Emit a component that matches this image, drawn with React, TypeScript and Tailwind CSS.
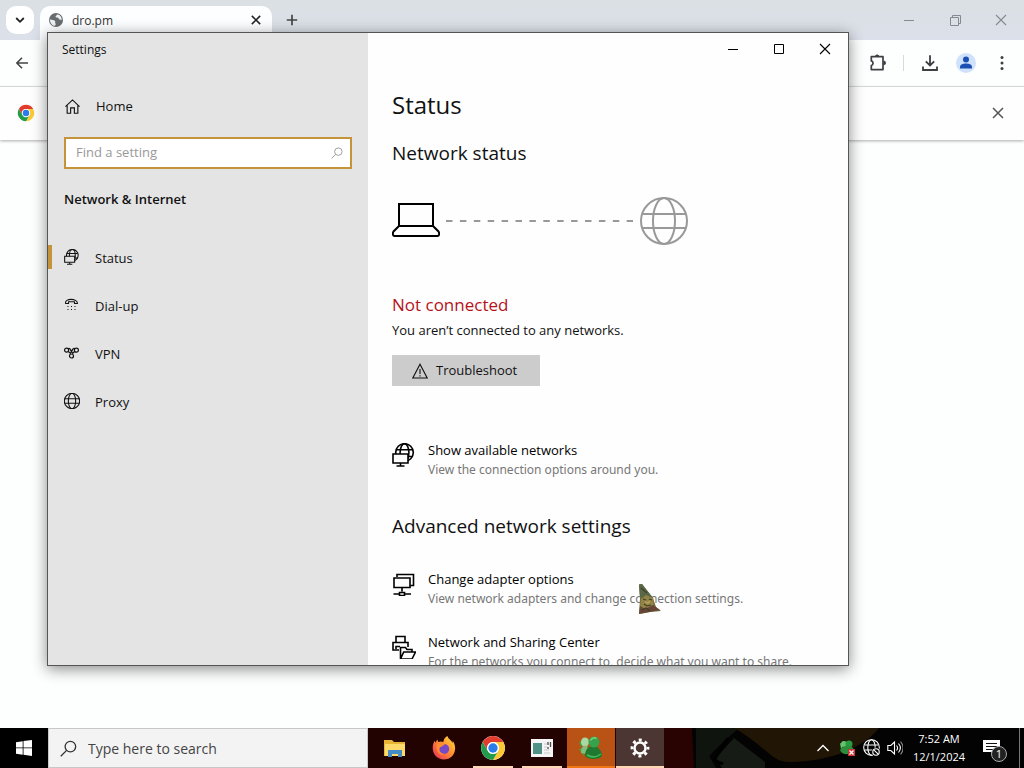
import type { ReactNode } from "react";

function ChromeLogo({ className }: { className?: string }) {
  return (
    <svg viewBox="0 0 48 48" className={className} aria-hidden="true">
      <circle cx="24" cy="24" r="22" fill="#fff" />
      <path d="M24 13H43.05A22 22 0 0 0 4.95 13L14.47 29.5A11 11 0 0 1 24 13Z" fill="#e33b2e" />
      <path d="M33.53 29.5 24 46A22 22 0 0 0 43.05 13H24A11 11 0 0 1 33.53 29.5Z" fill="#fcc934" />
      <path d="M14.47 29.5 4.95 13A22 22 0 0 0 24 46L33.53 29.5A11 11 0 0 1 14.47 29.5Z" fill="#229b4b" />
      <circle cx="24" cy="24" r="11" fill="#fff" />
      <circle cx="24" cy="24" r="8.6" fill="#2a7de9" />
    </svg>
  );
}

function GlobeIcon({ className, thin = 1.4 }: { className?: string; thin?: number }) {
  return (
    <svg viewBox="0 0 48 48" className={className} fill="none" stroke="currentColor" strokeWidth={thin} aria-hidden="true">
      <circle cx="24" cy="24" r="23" />
      <ellipse cx="24" cy="24" rx="11" ry="23" />
      <path d="M2.5 17h43M2.5 31h43" />
    </svg>
  );
}

function GlobeMonitorIcon({ className, fill }: { className?: string; fill: string }) {
  return (
    <svg viewBox="0 0 24 24" className={className} fill="none" stroke="currentColor" strokeWidth="1.6" aria-hidden="true">
      <circle cx="12.5" cy="9.5" r="8.8" />
      <ellipse cx="12.5" cy="9.5" rx="4.4" ry="8.8" />
      <path d="M4.5 6.800h16M16 13.500h5" />
      <path d="M1 11h15v9H1z" fill={fill} />
      <path d="M8.500 20v3M4.500 23h8" />
    </svg>
  );
}

function CloseIcon({ className, width = 1.6 }: { className?: string; width?: number }) {
  return (
    <svg viewBox="0 0 12 12" className={className} fill="none" stroke="currentColor" strokeWidth={width} aria-hidden="true">
      <path d="m1 1 10 10M11 1 1 11" />
    </svg>
  );
}

function SearchGlyph({ className }: { className?: string }) {
  return (
    <svg viewBox="0 0 18 18" className={className} fill="none" stroke="currentColor" strokeWidth="1.4" aria-hidden="true">
      <circle cx="11" cy="7" r="5.6" />
      <path d="m7 11-6.2 6.2" />
    </svg>
  );
}

function BrowserWindow() {
  return (
    <section aria-label="Browser" className="flex min-h-0 flex-1 flex-col bg-[#fdfefe]">
      <header className="flex h-10 items-center bg-linear-to-b from-[#dae0e3] to-[#dce0ea] pl-1.5">
        <button aria-label="Search tabs" className="flex size-7 items-center justify-center rounded-[10px] bg-white">
          <svg viewBox="0 0 10 10" className="size-2.5" fill="none" stroke="#222" strokeWidth="1.8"><path d="m1.2 3 3.8 3.8L8.8 3" /></svg>
        </button>
        <div className="ml-1.5 flex h-[34px] w-58 items-center self-end rounded-t-[10px] bg-[#fcfeff] pr-[11px] pb-1.5 pl-2">
          <svg viewBox="0 0 16 16" className="size-4" aria-hidden="true">
            <circle cx="8" cy="8" r="7" fill="#6a6d70" />
            <path d="M2 7.200c1.500 1 4 .4 5 1.800.7 1-.3 1.700.5 2.600.5.600 0 1.500-.5 2.200C4 13.500 1.800 11 2 7.200ZM9.500 2.200c-.2 1.300-1.600 1-1.900 2-.2 1 .6 1.400 1.700 1.400 1.300 0 1.200 1.600 2.300 2 .9.300 1.500-.2 2.200.3C13.900 5 12 2.800 9.500 2.200Z" fill="#eef0f1" />
          </svg>
          <span className="ml-2 flex-1 pt-0.5 text-xs text-[#333]">dro.pm</span>
          <button aria-label="Close tab" className="text-[#222]"><CloseIcon className="size-2.5" width={1.9} /></button>
        </div>
        <button aria-label="New tab" className="ml-3.5 text-[#444]">
          <svg viewBox="0 0 12 12" className="size-3" fill="none" stroke="currentColor" strokeWidth="1.7"><path d="M6 .8v10.400M.8 6h10.400" /></svg>
        </button>
        <div className="ml-auto flex text-[#858a90]">
          <button aria-label="Minimize browser" className="flex h-10 w-[46px] items-center justify-center">
            <svg viewBox="0 0 10 10" className="size-2.5" stroke="currentColor"><path d="M0 5.500h10" /></svg>
          </button>
          <button aria-label="Restore browser" className="flex h-10 w-[46px] items-center justify-center">
            <svg viewBox="0 0 11 11" className="size-[11px]" fill="none" stroke="currentColor"><path d="M.5 2.500h8v8h-8zM2.500 2.500v-2h8v8h-2" /></svg>
          </button>
          <button aria-label="Close browser" className="flex h-10 w-[46px] items-center justify-center"><CloseIcon className="size-3" width={1.1} /></button>
        </div>
      </header>
      <div className="flex h-[47px] items-center justify-between border-b border-[#dcdfe0] bg-[#fcfffe] pr-3 pl-4">
        <button aria-label="Back" className="text-[#444]">
          <svg viewBox="0 0 12 12" className="size-3" fill="none" stroke="currentColor" strokeWidth="1.5"><path d="M12 6H1M6 .8.900 6 6 11.200" /></svg>
        </button>
        <div className="flex items-center text-[#3c4043]">
          <button aria-label="Extensions">
            <svg viewBox="0 0 18 18" className="size-[18px]" fill="none" stroke="currentColor" strokeWidth="1.700" strokeLinejoin="round">
              <path d="M2.300 2.700h11.700v12.900H2.300v-4c2.300-.5 2.300-4.200 0-4.700z" />
              <path d="M6.300 2.300A1.900 1.900 0 0 1 10 2.300zM14.800 7a1.900 1.900 0 0 1 0 3.800z" fill="currentColor" strokeWidth=".6" />
            </svg>
          </button>
          <span className="ml-4 h-4 w-px bg-[#d6dadd]" />
          <button aria-label="Downloads" className="ml-[18px]">
            <svg viewBox="0 0 16 16" className="size-4" fill="none" stroke="currentColor" strokeWidth="1.800"><path d="M8 .3v10M3.800 6.300 8 10.500l4.200-4.200M1 11.500V15h14v-3.500" /></svg>
          </button>
          <button aria-label="Profile" className="ml-[18px] flex size-5 items-center justify-center rounded-full bg-[#d0e2fb]">
            <svg viewBox="0 0 14 14" className="size-3.5" fill="#1a4fb4"><circle cx="7" cy="3.500" r="3" /><path d="M1 12.500v-2C1.500 8.300 4.500 7.500 7 7.500s5.500.8 6 3v2z" /></svg>
          </button>
          <button aria-label="Menu" className="ml-4 flex w-5 justify-center">
            <svg viewBox="0 0 4 16" className="h-4 w-1" fill="currentColor"><circle cx="2" cy="2.500" r="1.500" /><circle cx="2" cy="8" r="1.500" /><circle cx="2" cy="13.500" r="1.500" /></svg>
          </button>
        </div>
      </div>
      <div className="flex h-[53px] items-center justify-between bg-[#fefefe] pr-5 pb-px pl-[17px] shadow-[0_1px_3px_#aaaaaa]">
        <ChromeLogo className="size-[18px]" />
        <button aria-label="Dismiss" className="text-[#555]"><CloseIcon className="size-3" width={1.5} /></button>
      </div>
    </section>
  );
}

const navItems = [
  { label: "Status", icon: <GlobeMonitorIcon className="size-4" fill="#e4e4e4" /> },
  {
    label: "Dial-up",
    icon: (
      <svg viewBox="0 0 16 16" className="size-4" fill="none" stroke="currentColor" strokeWidth="1.100" aria-hidden="true">
        <path d="M1.500 6.500C.5 1 13.500 1 13.500 6.500h-3V4.800h-6v1.700z" strokeLinejoin="round" />
        <path d="M3.500 9.500h1M7 9.500h1M10.500 9.500h1M3.500 12.500h1M7 12.500h1M10.500 12.500h1" />
      </svg>
    ),
  },
  {
    label: "VPN",
    icon: (
      <svg viewBox="0 0 16 16" className="size-4" fill="none" stroke="currentColor" strokeWidth="1.200" aria-hidden="true">
        <circle cx="2.600" cy="5.200" r="2" /><circle cx="12.400" cy="5.200" r="2" /><circle cx="7.500" cy="11" r="2" />
        <path d="M4 3.700C6 2.500 6.500 5 7.500 6.500S9 9 9 9M11 3.700C9 2.500 8.500 5 7.500 6.500S6 9 6 9M4.200 6.500 6 7.800M10.800 6.500 9 7.800" />
      </svg>
    ),
  },
  { label: "Proxy", icon: <GlobeIcon className="size-4" thin={3.2} /> },
];

function SettingLink({ icon, title, children }: { icon: ReactNode; title: string; children: ReactNode }) {
  return (
    <a href="#" className="flex gap-3 text-black">
      <span className="flex size-6 shrink-0 translate-y-0.5 items-center justify-center">{icon}</span>
      <span className="whitespace-nowrap">
        <span className="block leading-[19px]">{title}</span>
        <span className="block font-['Noto_Sans',sans-serif] text-xs leading-[19px] text-[#777]">{children}</span>
      </span>
    </a>
  );
}

function SettingsWindow() {
  return (
    <section aria-label="Settings" className="absolute top-8 left-[47px] flex h-[634px] w-[802px] overflow-hidden border border-[#555] bg-[#fefefe] text-[13px] text-[#111] shadow-[0_3px_14px_#0007]">
      <aside className="w-80 shrink-0 bg-[#e4e4e4]">
        <div className="flex h-8 items-center pt-0.5 pl-3.5 text-xs">Settings</div>
        <a href="#" className="mt-[17px] flex h-12 items-center gap-4 pl-[17px]">
          <svg viewBox="0 0 16 16" className="size-[15px]" fill="none" stroke="currentColor" strokeWidth="1.200" aria-hidden="true"><path d="M.5 8.200 8 1l7.500 7.200M2.300 7v8.200H6V9.500h4v5.700h3.700V7" /></svg>
          <span className="pt-0.5">Home</span>
        </a>
        <label className="mx-4 mt-[7px] flex h-8 items-center border-2 border-[#c4933a] bg-white pr-[7px] pl-2.5">
          <input type="search" aria-label="Find a setting" placeholder="Find a setting" className="min-w-0 flex-1 outline-none placeholder:text-[#999]" />
          <SearchGlyph className="size-3 text-[#999]" />
        </label>
        <h2 className="mt-[18px] h-6 pl-4 leading-6 font-semibold">Network &amp; Internet</h2>
        <nav className="mt-[22px]">
          {navItems.map((item, index) => (
            <a key={item.label} href="#" aria-current={index === 0 ? "page" : undefined} className="flex h-12 items-center">
              <span className={index === 0 ? "h-6 w-1 bg-[#c4933a]" : "h-6 w-1"} />
              <span className="ml-3 w-[31px]">{item.icon}</span>
              <span className="pt-[3px]">{item.label}</span>
            </a>
          ))}
        </nav>
      </aside>

      <main className="min-w-0 flex-1">
        <div className="flex h-8 justify-end text-black">
          <button aria-label="Minimize" className="flex w-[46px] items-center justify-center"><svg viewBox="0 0 10 10" className="size-2.5" stroke="currentColor"><path d="M0 5.500h10" /></svg></button>
          <button aria-label="Maximize" className="flex w-[46px] items-center justify-center"><svg viewBox="0 0 10 10" className="size-2.5" fill="none" stroke="currentColor"><path d="M.5.500h9v9h-9z" /></svg></button>
          <button aria-label="Close" className="flex w-[46px] items-center justify-center"><CloseIcon className="size-3" width={1.1} /></button>
        </div>
        <div className="pl-6">
          <h1 className="mt-6 h-8 text-2xl leading-8">Status</h1>
          <h2 className="mt-5 h-6 text-[19px] leading-6">Network status</h2>
          <div className="mt-8 flex h-12 items-center">
            <svg viewBox="0 0 48 36" className="h-9 w-12" fill="none" stroke="#000" strokeWidth="2" aria-hidden="true">
              <path d="M7 1h34v22H7zM7 23l-5.500 5.500C.5 30 .5 33 2.500 33h43c2 0 2-3 1-4.500L41 23" />
            </svg>
            <svg viewBox="0 0 188 2" className="mx-1.5 h-0.5 w-[188px]" aria-hidden="true"><path d="M0 1h187" stroke="#999" strokeWidth="2" strokeDasharray="6.500 7.400" /></svg>
            <GlobeIcon className="size-12 text-[#999]" thin={2} />
          </div>
          <h3 className="mt-12 h-6 text-[17px] leading-6 text-[#b5121b]">Not connected</h3>
          <p className="mt-px h-6 leading-6">You aren’t connected to any networks.</p>
          <button className="mt-[13px] flex h-[31px] w-37 items-center gap-2 bg-[#ccc] pl-5">
            <svg viewBox="0 0 16 16" className="size-4" fill="none" stroke="currentColor" strokeWidth="1.100" aria-hidden="true"><path d="M8 1.200 15.200 15H.8zM8 6v5M8 12.200v1.200" /></svg>
            Troubleshoot
          </button>
          <div className="mt-[55px]">
            <SettingLink icon={<GlobeMonitorIcon className="size-6" fill="#fefefe" />} title="Show available networks">View the connection options around you.</SettingLink>
          </div>
          <h2 className="mt-[35px] h-6 text-[19px] leading-6">Advanced network settings</h2>
          <div className="mt-8 flex flex-col gap-[25px]">
            <SettingLink
              title="Change adapter options"
              icon={
                <svg viewBox="0 0 24 24" className="size-6" fill="none" stroke="currentColor" strokeWidth="1.600" aria-hidden="true">
                  <path d="M5 5V2.500h16.500v11h-3M2 6h16v9.500H2zM10 15.500v4M1.500 22H7M13 22h6M7.500 20.500h5v3h-5z" />
                </svg>
              }
            >
              View network adapters and change connection settings.
            </SettingLink>
            <SettingLink
              title="Network and Sharing Center"
              icon={
                <svg viewBox="0 0 24 24" className="size-6" fill="none" stroke="currentColor" strokeWidth="1.600" aria-hidden="true">
                  <path d="M4 7.500V1.500h9v6M7 15H1V7.500h15V12M4 14v-2.500h4" />
                  <path d="M8.500 24V12.500h5l1.500 2h5v2.500M8.500 24l3.200-7H23.500L20 24z" />
                </svg>
              }
            >
              For the networks you connect to, decide what you want to share.
            </SettingLink>
          </div>
        </div>
      </main>
    </section>
  );
}

function GnomePointer() {
  return (
    <svg viewBox="0 0 24 32" className="pointer-events-none absolute top-[583px] left-[638px] h-8 w-6" aria-hidden="true">
      <path d="M1 1.500 4 1l11 14 3 9 5 4-11 1-11 2 1-15z" fill="#6c6b3c" />
      <path d="m1 1.500 3-.5 11 14-4 1-9-2z" fill="#596747" />
      <path d="m3 16 5-4 7 3 1 9-8 4-6-4z" fill="#918247" />
      <path d="m2 23 5 3 8-4 7 5-21 4z" fill="#684536" />
      <path d="m5 16 3 1m3-1 3 1M6 21l3 2 4-1M3 5l6 5M4 27l4-2 4 3" stroke="#403d27" strokeWidth="1.100" fill="none" />
      <path d="m7 19 3 1 2-2" stroke="#b9a35b" strokeWidth="1.500" fill="none" />
    </svg>
  );
}

function Buddy({ className }: { className?: string }) {
  return (
    <svg viewBox="0 0 26 24" className={className} aria-hidden="true">
      <path d="M1 5 5 7l-2 4zM1 13l4-1 1 8z" fill="#39a94b" />
      <ellipse cx="7" cy="6" rx="4" ry="4.500" fill="#a9d9a2" />
      <path d="M3 17c0-6 2-8 6-7l4 9z" fill="#82bd7b" />
      <path d="M7 20c0-6 3-10 8-10s9 5 9 10c-3 4-14 4-17 0Z" fill="#1e7830" />
      <circle cx="16" cy="6" r="5.500" fill="#35a34b" />
      <path d="M12.500 4.500c1.500-2.500 4-3 6-2" stroke="#72ce76" strokeWidth="1.500" fill="none" />
      <path d="M9 19c5 3 10 2 14-1" stroke="#49b958" strokeWidth="1.500" fill="none" />
    </svg>
  );
}

function TaskButton({ label, children, tone = "", underline = "" }: { label: string; children: ReactNode; tone?: string; underline?: string }) {
  return (
    <button aria-label={label} className={`flex h-10 w-12 flex-col items-center ${tone}`}>
      <span className="flex h-[38px] items-center pt-0.5">{children}</span>
      <span className={`h-0.5 ${underline}`} />
    </button>
  );
}

function Taskbar() {
  return (
    <footer className="relative flex h-10 shrink-0 items-center bg-[#230302] text-white">
      <svg viewBox="0 0 360 40" className="absolute top-0 right-0 h-10 w-90" aria-hidden="true">
        <path d="M0 0h360v40H0z" fill="#030303" />
        <path d="M0 0h28l2 40H0z" fill="#280302" />
        <path d="M32 0h43L60 13 45 28l7 12H32z" fill="#10140f" />
        <path d="M70 10 101 34v6H58l-6-10z" fill="#171b16" />
        <path d="M70 0h145c-20 25-60 34-90 34-18 0-22-15-55-34Z" fill="#211505" />
        <path d="M64 10 50 32l9 4" stroke="#000" strokeWidth="3" fill="none" />
      </svg>
      <button aria-label="Start" className="relative flex h-10 w-12 items-center justify-center bg-black">
        <svg viewBox="0 0 16 16" className="size-4" fill="#fff"><path d="m0 2.200 6.700-1v6.300H0zM7.500 1.100 16 0v7.500H7.500zM0 8.300h6.700v6.400L0 13.800zM7.500 8.300H16V16l-8.500-1.200z" /></svg>
      </button>
      <label className="relative flex h-10 w-80 items-center gap-[11px] border border-[#c8c8c8] bg-[#f3f3f3] pr-3 pl-[11px] text-[#333]">
        <SearchGlyph className="size-[17px]" />
        <input type="search" aria-label="Type here to search" placeholder="Type here to search" className="min-w-0 flex-1 pt-0.5 text-sm outline-none placeholder:text-[#444]" />
      </label>
      <div className="relative flex gap-px pl-[3px]">
        <TaskButton label="File Explorer">
          <svg viewBox="0 0 22 20" className="h-5 w-[22px]"><path d="M0 2h8l2 2h11v14H0z" fill="#e9b335" /><path d="M1 6h20v12H1z" fill="#ffda6a" /><path d="M4 19v-7h14v7h-4v-3H8v3z" fill="#438cc6" /></svg>
        </TaskButton>
        <TaskButton label="Firefox">
          <svg viewBox="0 0 24 24" className="size-6">
            <defs><linearGradient id="fox" x1="1" y1="0" x2="0" y2="1"><stop stopColor="#ffe13d" /><stop offset=".45" stopColor="#ff9130" /><stop offset="1" stopColor="#e82562" /></linearGradient></defs>
            <path d="M15.500 0c.5 3 4 4 5 7 .3-.7.3-1.500.2-2.200 2.200 3 3.200 7 1.900 11C21 21 16.500 23.500 12 23.500 5.500 23.500.7 18.500.7 12c0-3 .9-5.500 2-7.200l.8 2L5.300 3.500l1 2.500c2-.8 4-.7 5 .2C11.500 3.500 13 1 15.500 0Z" fill="url(#fox)" />
            <circle cx="12.200" cy="13" r="5" fill="#7549c8" />
            <path d="M5 8c3-2 7-1 8 1-3 0-2 2-5 2-2 4 1 7 5 7-5 3-10-3-8-10Z" fill="#ff8b2c" />
          </svg>
        </TaskButton>
        <TaskButton label="Chrome" underline="w-10 bg-[#ffd6b3]"><ChromeLogo className="size-[26px]" /></TaskButton>
        <TaskButton label="Application" underline="w-10 bg-[#ffd6b3]">
          <svg viewBox="0 0 22 18" className="h-[18px] w-[22px]"><path d="M0 0h22v18H0z" fill="#f4f5f4" /><path d="M2 4h9v11H2z" fill="#4f9286" /><path d="M13 5h3M13 8h3M13 11h5M13 14h6" stroke="#c5c9c9" /><path d="M17 3v3m2.500-3v5M17 8v2" stroke="#4b4b4b" strokeWidth="1.300" /></svg>
        </TaskButton>
        <TaskButton label="Messenger" tone="bg-[#b95315]" underline="w-12 bg-[#ef7613]"><Buddy className="h-6 w-[26px]" /></TaskButton>
        <TaskButton label="Settings" tone="bg-[#4b3634]" underline="w-12 bg-[#ffd6b3]">
          <svg viewBox="0 0 20 20" className="size-5" fill="none" stroke="#fff"><circle cx="10" cy="10" r="5.500" strokeWidth="2.500" /><circle cx="10" cy="10" r="8" strokeWidth="2.800" strokeDasharray="3 3.283" strokeDashoffset="1.500" /></svg>
        </TaskButton>
      </div>
      <div className="relative ml-auto flex h-10 items-center">
        <button aria-label="Show hidden icons"><svg viewBox="0 0 12 8" className="h-2 w-3" fill="none" stroke="#fff" strokeWidth="1.300"><path d="m.5 7 5.500-5.500L11.500 7" /></svg></button>
        <button aria-label="Messenger status" className="ml-2.5">
          <svg viewBox="0 0 16 16" className="size-4"><path d="M1 3 5 5 2 9z" fill="#5ccb69" /><circle cx="5" cy="4" r="3" fill="#66c26b" /><circle cx="10" cy="4" r="3.500" fill="#279b40" /><path d="M1 10c3-5 12-6 14 0-2 5-12 6-14 0Z" fill="#2b8e3d" /><path d="M9 9h7v7H9z" fill="#cf3038" /><path d="m10.500 10.500 4 4m0-4-4 4" stroke="#fff" strokeWidth="1.300" /></svg>
        </button>
        <button aria-label="No network" className="ml-2">
          <svg viewBox="0 0 18 18" className="size-[18px]" fill="none" stroke="#fff" strokeWidth="1.100"><circle cx="8.500" cy="8.500" r="7.800" /><ellipse cx="8.500" cy="8.500" rx="3.700" ry="7.800" /><path d="M1.500 6h14M1.500 11h9" /><circle cx="13" cy="13" r="4.500" fill="#050505" stroke="none" /><circle cx="13" cy="13" r="3.200" /><path d="m10.800 10.800 4.400 4.400" /></svg>
        </button>
        <button aria-label="Volume" className="ml-1.5">
          <svg viewBox="0 0 16 16" className="size-4" fill="none" stroke="#fff" strokeWidth="1.100"><path d="M.8 5.500h3L7.500 2v12L3.800 10.500h-3z" /><path d="M9.500 5.500c1.300 1.500 1.300 3.500 0 5M11.500 3.500c2.300 2.700 2.300 6.300 0 9" /><path d="M13.500 1.500c3.200 4 3.200 9 0 13" stroke="#888" /></svg>
        </button>
        <time className="ml-1 w-16 text-center text-[11px] leading-[18px]">7:52 AM<br />12/1/2024</time>
        <button aria-label="Notifications" className="relative ml-3 h-10 w-9">
          <svg viewBox="0 0 18 18" className="size-[18px]"><path d="M0 1h17v12h-5v4l-4-4H0z" fill="#fff" /><path d="M3 4.500h11M3 7.500h11M3 10.500h7" stroke="#111" strokeWidth="1.100" /></svg>
          <span className="absolute top-[18px] left-2 flex size-4 items-center justify-center rounded-full border border-[#aaa] bg-[#222] text-[11px]">1</span>
        </button>
        <button aria-label="Show desktop" className="h-10 w-[5px] border-l border-[#777]" />
      </div>
    </footer>
  );
}

export default function App() {
  return (
    <div className="relative flex h-screen flex-col overflow-hidden font-['Open_Sans','Noto_Sans',sans-serif]">
      <BrowserWindow />
      <SettingsWindow />
      <Taskbar />
      <GnomePointer />
    </div>
  );
}
